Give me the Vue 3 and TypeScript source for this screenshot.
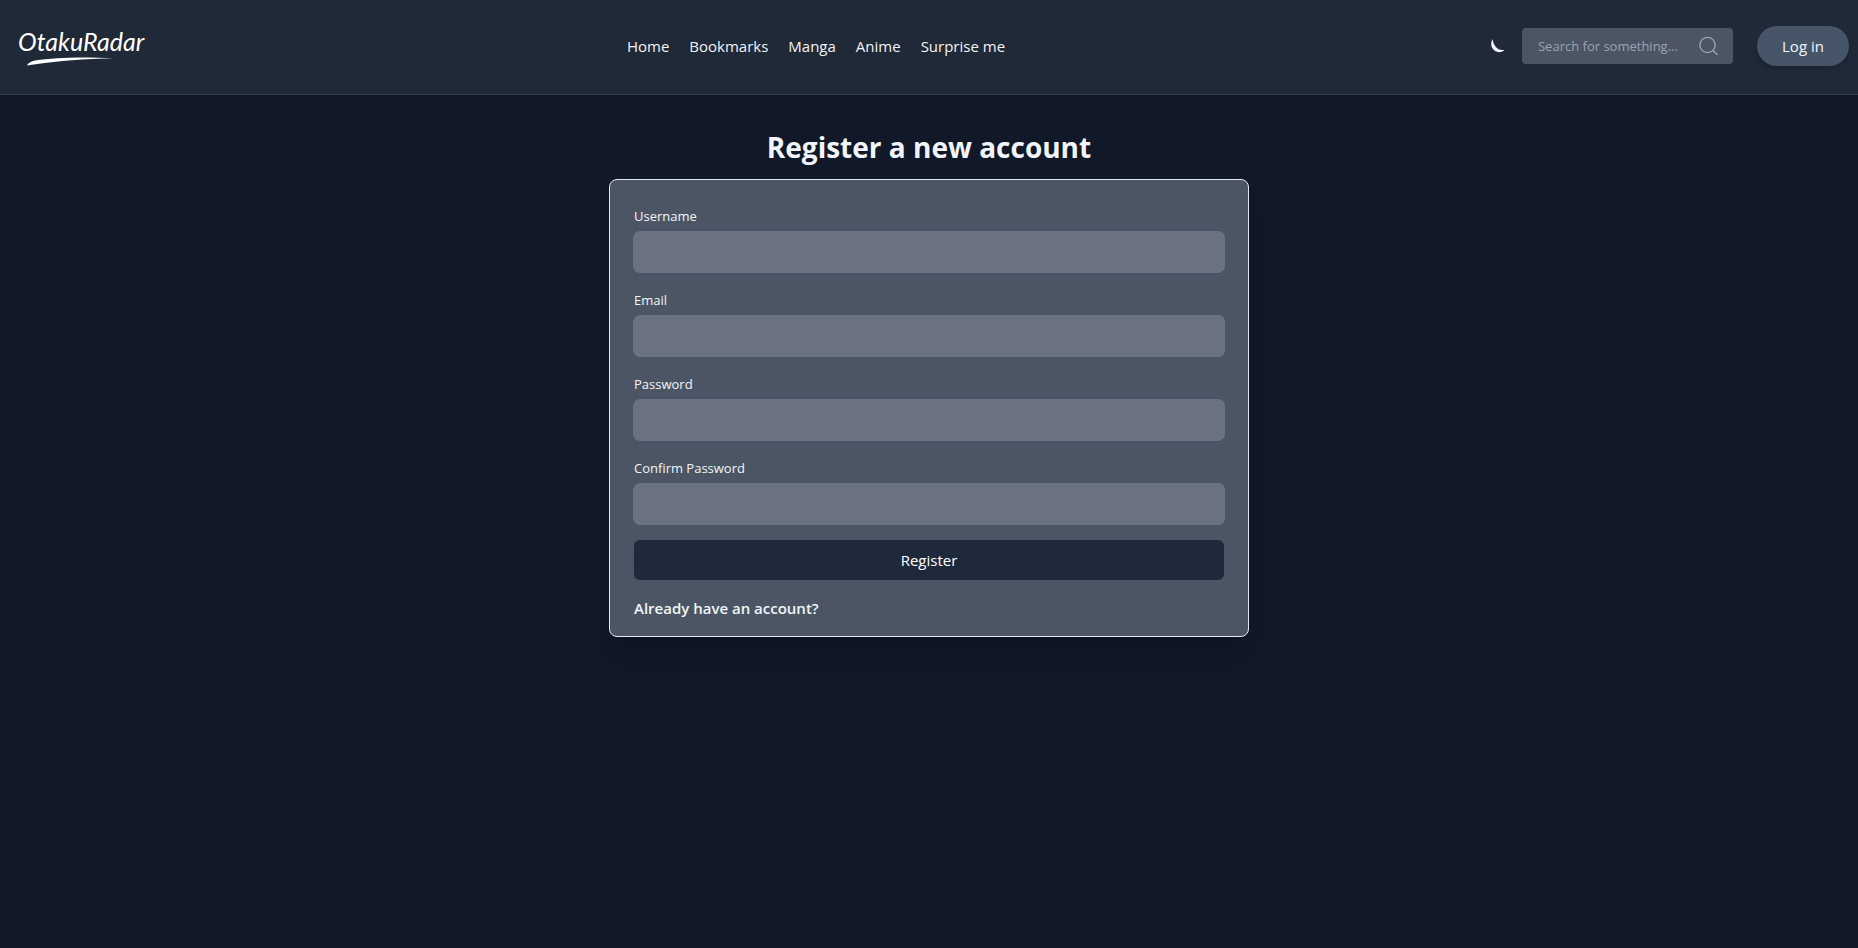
<script setup lang="ts">
import { reactive, ref } from 'vue'

interface Field {
  id: 'username' | 'email' | 'password' | 'confirm'
  label: string
  type: string
}

const links: string[] = ['Home', 'Bookmarks', 'Manga', 'Anime', 'Surprise me']
const fields: Field[] = [
  { id: 'username', label: 'Username', type: 'text' },
  { id: 'email', label: 'Email', type: 'email' },
  { id: 'password', label: 'Password', type: 'password' },
  { id: 'confirm', label: 'Confirm Password', type: 'password' },
]
const form = reactive({ username: '', email: '', password: '', confirm: '' })
const query = ref('')
</script>

<template>
  <div class="page">
    <header class="header">
      <a class="logo" href="#" aria-label="OtakuRadar">
        <span class="logo-name">OtakuRadar</span>
        <svg class="swoosh" viewBox="0 0 125 10" aria-hidden="true">
          <path d="M9 9.500C10 7 13 5.500 17 4.500C38 1.500 64 .5 96 2.500C66 2.500 40 5 19 8C15 8.500 12 9 9 9.500Z" />
        </svg>
      </a>
      <nav class="nav">
        <a v-for="link in links" :key="link" href="#">{{ link }}</a>
      </nav>
      <div class="tools">
        <button class="theme" type="button" aria-label="Toggle dark mode">
          <svg viewBox="0 0 16 16" aria-hidden="true">
            <path d="M3.700 1C1.300 4.500 1.800 9.500 5.500 12.500C8.800 15.100 13 14.500 15.500 12C11.500 12.500 8.500 11.200 6.500 8.500C4.800 6.200 3.800 4 3.700 1Z" />
          </svg>
        </button>
        <form class="search" @submit.prevent>
          <input v-model="query" type="text" placeholder="Search for something..." aria-label="Search" />
          <button type="submit" aria-label="Search">
            <svg viewBox="0 0 20 20" aria-hidden="true">
              <circle cx="9.500" cy="9" r="7.600" />
              <path d="M15 14.500L19.300 18.800" />
            </svg>
          </button>
        </form>
        <button class="login" type="button">Log in</button>
      </div>
    </header>

    <main class="main">
      <h1>Register a new account</h1>
      <form class="card" @submit.prevent>
        <div v-for="field in fields" :key="field.id" class="field">
          <label :for="field.id">{{ field.label }}</label>
          <input :id="field.id" v-model="form[field.id]" :type="field.type" />
        </div>
        <button class="submit" type="submit">Register</button>
        <a class="signin" href="#">Already have an account?</a>
      </form>
    </main>
  </div>
</template>

<style>
body {
  margin: 0;
  background: #111827;
}
</style>

<style scoped>
.page {
  min-height: 100vh;
  background: #111827;
  color: #f1f5f9;
  font-family: "Segoe UI", "Open Sans", "Noto Sans", sans-serif;
  font-size: 15px;
  line-height: 24px;
}
.page * {
  box-sizing: border-box;
}
button,
input {
  margin: 0;
  border: 0;
  padding: 0;
  font: inherit;
  color: inherit;
  background: none;
}
button {
  cursor: pointer;
}
a {
  color: inherit;
  text-decoration: none;
}
.header {
  display: flex;
  align-items: center;
  justify-content: space-between;
  padding: 26px 9px 28px 18px;
  background: #1f2937;
  border-bottom: 1px solid #374151;
  box-shadow: 0 1px 3px rgba(0, 0, 0, 0.2);
}
.logo {
  display: flex;
  flex-direction: column;
  width: 125px;
  color: #fff;
}
.logo-name {
  font-family: "Segoe Script", Lato, sans-serif;
  font-size: 25px;
  font-style: italic;
  line-height: 30px;
}
.swoosh {
  width: 125px;
  height: 10px;
  fill: #fff;
}
.nav {
  display: flex;
  gap: 20px;
  color: #f3f4f6;
  font-weight: 500;
}
.tools {
  display: flex;
  align-items: center;
}
.theme {
  width: 16px;
  height: 16px;
  margin-right: 17px;
}
.theme svg {
  display: block;
  fill: #f1f5f9;
}
.search {
  display: flex;
  align-items: center;
  width: 211px;
  height: 36px;
  margin-right: 24px;
  padding: 0 15px 0 16px;
  border-radius: 4px;
  background: #4b5563;
}
.search input {
  flex: 1;
  min-width: 0;
  font-size: 13px;
  outline: none;
}
.search input::placeholder {
  color: #9ca3af;
  opacity: 1;
}
.search svg {
  display: block;
  width: 20px;
  height: 20px;
  fill: none;
  stroke: #9ca3af;
  stroke-width: 1.4;
}
.login {
  width: 92px;
  height: 40px;
  border-radius: 20px;
  background: #475569;
  font-weight: 500;
  box-shadow: 0 4px 6px -1px rgba(0, 0, 0, 0.1), 0 2px 4px -2px rgba(0, 0, 0, 0.1);
}
.main {
  display: flex;
  flex-direction: column;
  align-items: center;
  padding: 34px 16px;
}
h1 {
  margin: 0 0 14px;
  font-size: 28px;
  font-weight: 700;
  line-height: 36px;
}
.card {
  display: flex;
  flex-direction: column;
  width: 100%;
  max-width: 640px;
  padding: 26px 24px 16px;
  border: 1px solid #e2e8f0;
  border-radius: 8px;
  background: #4b5563;
  box-shadow: 0 20px 25px -5px rgba(0, 0, 0, 0.1), 0 8px 10px -6px rgba(0, 0, 0, 0.1);
}
.field {
  display: flex;
  flex-direction: column;
  gap: 4px;
  margin-bottom: 16px;
}
.field label {
  padding-bottom: 2px;
  font-size: 13px;
  line-height: 20px;
}
.field input {
  height: 40px;
  padding: 0 12px;
  border-radius: 6px;
  background: #6b7280;
  box-shadow: 0 0 0 1px #64748b;
  outline: none;
}
.field + .field {
  padding-top: 2px;
}
.submit {
  height: 40px;
  border-radius: 6px;
  background: #1e293b;
  color: #fff;
}
.signin {
  align-self: flex-start;
  margin-top: 16px;
  font-weight: 600;
}
</style>
